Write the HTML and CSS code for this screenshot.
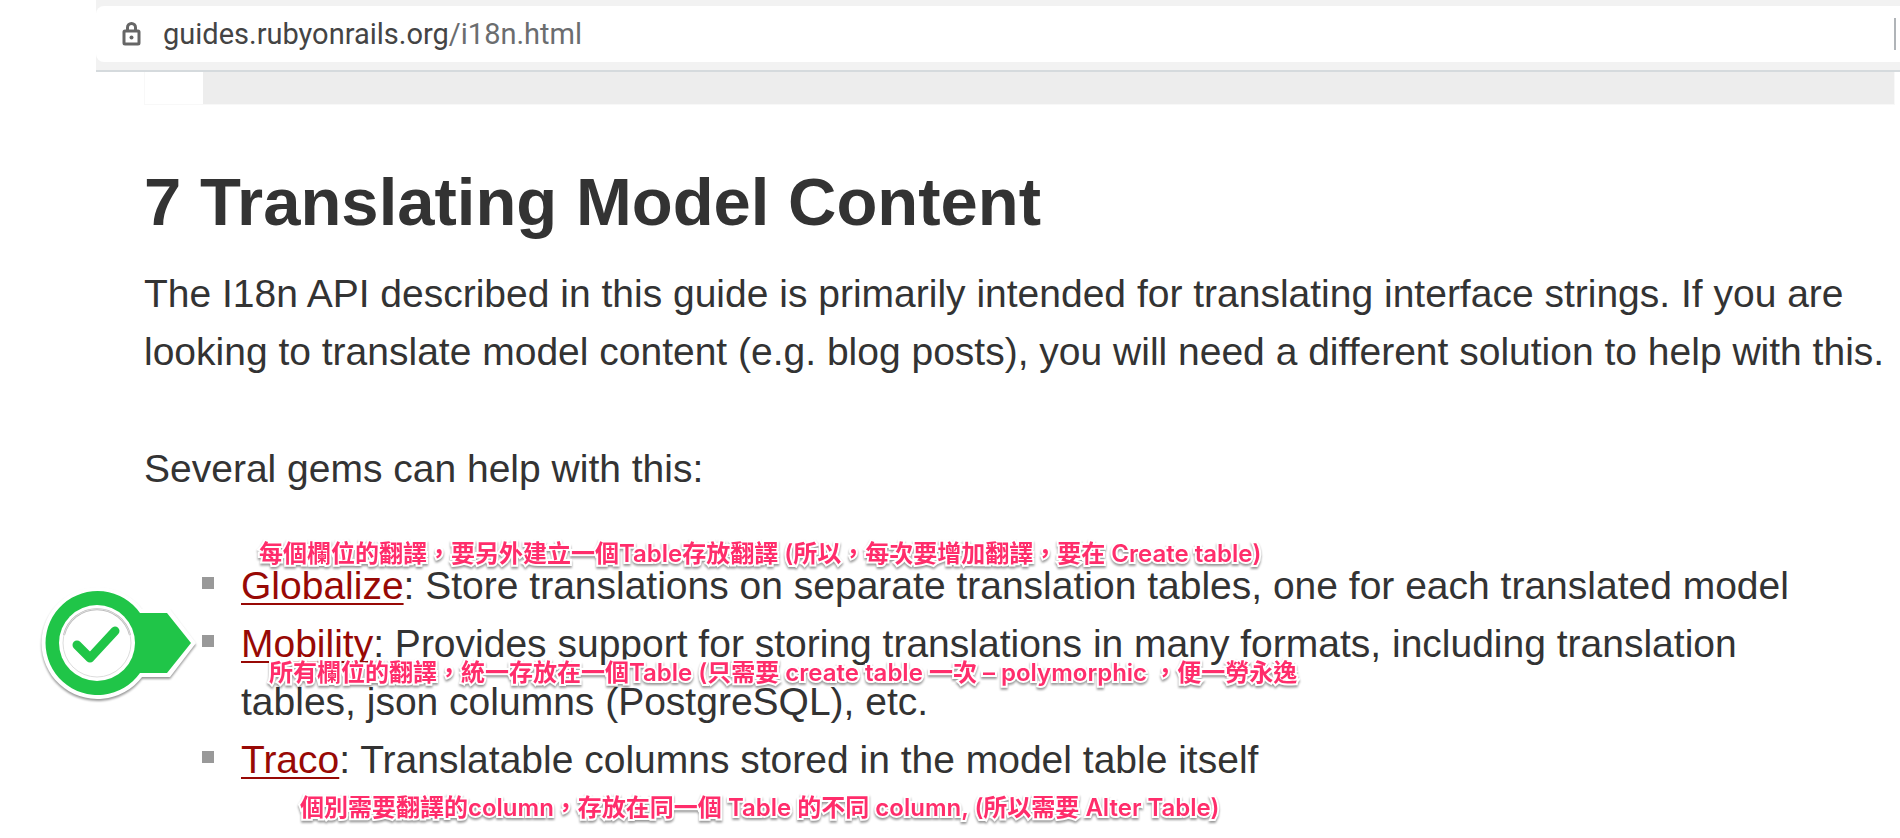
FILE: index.html
```html
<!DOCTYPE html>
<html lang="en">
<head>
<meta charset="utf-8">
<title>Rails Internationalization (I18n) API</title>
<link rel="stylesheet" href="styles.css">
</head>
<body>
<div class="browser">
  <header class="toolbar">
    <div class="address">
      <svg class="lock" width="20" height="26" viewBox="0 0 20 26" aria-hidden="true">
        <rect x="2" y="10" width="15" height="13" rx="1" fill="none" stroke="#666" stroke-width="3"/>
        <path d="M5.500 10V6.500a4 4 0 0 1 8 0V10" fill="none" stroke="#666" stroke-width="3"/>
        <circle cx="9.500" cy="16.500" r="2" fill="#666"/>
      </svg>
      <a class="url" href="#i18n">guides.rubyonrails.org<span class="path">/i18n.html</span></a>
      <span class="divider"></span>
    </div>
  </header>
  <main class="content" id="i18n">
    <div class="code"></div>
    <h1 class="title">7 Translating Model Content</h1>
    <p class="text">The I18n API described in this guide is primarily intended for translating interface strings. If you are looking to translate model content (e.g. blog posts), you will need a different solution to help with this.</p>
    <p class="text">Several gems can help with this:</p>
    <ul class="gems">
      <li class="gem"><a class="link" href="#globalize">Globalize</a>: Store translations on separate translation tables, one for each translated model
        <span class="note note-globalize" lang="zh-Hant">每個欄位的翻譯，要另外建立一個Table存放翻譯 (所以，每次要增加翻譯，要在 Create table)</span>
      </li>
      <li class="gem"><a class="link" href="#mobility">Mobility</a>: Provides support for storing translations in many formats, including translation tables, json columns (PostgreSQL), etc.
        <span class="note note-mobility" lang="zh-Hant">所有欄位的翻譯，統一存放在一個Table (只需要 create table 一次 – polymorphic ，便一勞永逸</span>
        <svg class="stamp" width="162" height="120" viewBox="0 0 162 120" aria-hidden="true">
          <path d="M102 26H130L156 60L130 94H102A56 56 0 1 1 102 26Z" fill="#fff"/>
          <path d="M100 30H127L151 60L127 90H100A52 52 0 1 1 100 30Z" fill="#20c548"/>
          <circle cx="57" cy="60" r="38" fill="#fff"/>
          <path d="M24 52A34 34 0 0 1 90 52" fill="none" stroke="#bbb" stroke-width="2"/>
          <circle cx="57" cy="60" r="34" fill="none" stroke="#ddd" stroke-width="1"/>
          <path d="M37 62L50 75L75 48" fill="none" stroke="#20c548" stroke-width="9" stroke-linecap="round" stroke-linejoin="round"/>
        </svg>
      </li>
      <li class="gem"><a class="link" href="#traco">Traco</a>: Translatable columns stored in the model table itself
        <span class="note note-traco" lang="zh-Hant">個別需要翻譯的column，存放在同一個 Table 的不同 column, (所以需要 Alter Table)</span>
      </li>
    </ul>
  </main>
</div>
</body>
</html>
```
FILE: styles.css
```css
* {
  box-sizing: border-box;
}

body {
  margin: 0;
  background: #fff;
  color: #333;
  font-family: "Liberation Sans", Arial, sans-serif;
}

.browser {
  margin-left: 96px;
}

.toolbar {
  padding: 6px 0 8px;
  background: #f2f2f2;
  border-bottom: 2px solid #d5dadd;
}

.address {
  display: flex;
  align-items: center;
  height: 56px;
  padding: 0 4px 0 26px;
  background: #fff;
  border-radius: 8px 0 0 8px;
}

.lock {
  margin-right: 21px;
}

.url {
  flex: 1;
  color: #444;
  font-family: Roboto, sans-serif;
  font-size: 29px;
  line-height: 36px;
  text-decoration: none;
}

.path {
  color: #6b6d6f;
}

.divider {
  width: 2px;
  height: 32px;
  background: #b0b4b8;
}

.content {
  padding: 0 0 48px 48px;
}

.code {
  height: 33px;
  margin-right: 5px;
  border: 1px solid #f8f8f8;
  border-top: 0;
  background: linear-gradient(to right, #fff 58px, #ededed 58px);
}

.title {
  margin: 57px 0 23px;
  font-size: 67px;
  line-height: 80px;
}

.text {
  margin: 0 0 59px;
  font-size: 39px;
  line-height: 58px;
}

.gems {
  margin: 0;
  padding: 0;
  list-style: none;
}

.gem {
  position: relative;
  padding: 0 80px 0 97px;
  font-size: 39px;
  line-height: 58px;
}

.gem::before {
  content: "";
  position: absolute;
  top: 20px;
  left: 58px;
  width: 12px;
  height: 12px;
  background: #999;
}

.link {
  color: #980905;
  text-decoration: underline;
  text-decoration-thickness: 2px;
  text-underline-offset: 4px;
  text-decoration-skip-ink: none;
}

.note {
  position: absolute;
  z-index: 1;
  color: #ff2d6b;
  font-family: Inter, "Noto Sans CJK TC", sans-serif;
  font-size: 24px;
  font-weight: 600;
  line-height: 32px;
  white-space: nowrap;
  -webkit-text-stroke: 4px #fff;
  paint-order: stroke fill;
  filter: drop-shadow(0 2px 1px rgba(0, 0, 0, 0.4));
}

.note-globalize {
  top: -19px;
  left: 115px;
}

.note-mobility {
  top: 42px;
  left: 125px;
}

.note-traco {
  top: 61px;
  left: 156px;
}

.stamp {
  position: absolute;
  top: -32px;
  left: -104px;
  filter: drop-shadow(0 2px 1px rgba(0, 0, 0, 0.4));
}
```
